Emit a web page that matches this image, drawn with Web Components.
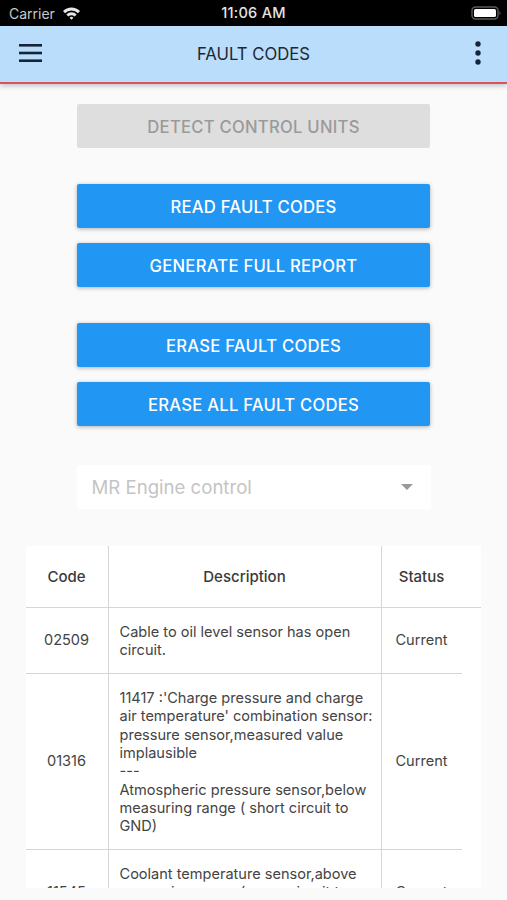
<!DOCTYPE html>
<html>
<head>
<meta charset="utf-8">
<style>
  html, body { margin: 0; padding: 0; background: #fafafa; }
  body { width: 507px; height: 900px; overflow: hidden; font-family: Inter, Roboto, "Liberation Sans", sans-serif; }
  main { display: flex; flex-direction: column; align-items: center; }
  .group { display: flex; flex-direction: column; gap: 15px; margin-top: 36px; }
  .first { margin-top: 20px; }
</style>
</head>
<body>
<status-bar></status-bar>
<app-bar title="FAULT CODES"></app-bar>
<main>
  <div class="group first"><action-button disabled>DETECT CONTROL UNITS</action-button></div>
  <div class="group">
    <action-button>READ FAULT CODES</action-button>
    <action-button>GENERATE FULL REPORT</action-button>
  </div>
  <div class="group">
    <action-button>ERASE FAULT CODES</action-button>
    <action-button>ERASE ALL FAULT CODES</action-button>
  </div>
  <unit-select>MR Engine control</unit-select>
  <fault-table>
    <fault-row code="02509" status="Current">Cable to oil level sensor has open circuit.</fault-row>
    <fault-row code="01316" status="Current">11417 :'Charge pressure and charge air temperature' combination sensor: pressure sensor,measured value implausible<br>---<br>Atmospheric pressure sensor,below measuring range ( short circuit to GND)</fault-row>
    <fault-row code="11545" status="Current">Coolant temperature sensor,above measuring range ( open circuit to positive)</fault-row>
  </fault-table>
</main>

<script>
class StatusBar extends HTMLElement {
    constructor() {
        super()
        this.attachShadow({ mode: 'open' }).innerHTML = `
            <style>
                :host {
                    display: flex;
                    align-items: center;
                    height: 26px;
                    padding: 0 5px 0 9px;
                    background: #000;
                    color: #e4e4e4;
                    font: 14px Inter, Roboto, sans-serif;
                }
                .carrier { display: flex; align-items: center; gap: 7px; flex: 1; color: #c8c8c8; }
                .time { flex: 1; text-align: center; font-weight: 500; font-size: 14.6px; letter-spacing: .25px; margin-left: -4px; white-space: nowrap; }
                .right { flex: 1; display: flex; justify-content: flex-end; }
                svg { display: block; }
            </style>
            <div class="carrier">Carrier
                <svg width="19" height="14" viewBox="0 0 19 14">
                    <path d="M1 5 A12 12 0 0 1 18 5 L16 7.2 A9 9 0 0 0 3 7.2Z M4.3 8.5 A7.4 7.4 0 0 1 14.7 8.5 L12.6 10.6 A4.5 4.5 0 0 0 6.4 10.6Z M7.6 11.8 A2.7 2.7 0 0 1 11.4 11.8 L9.5 13.8Z" fill="#e8e8e8"/>
                </svg>
            </div>
            <div class="time">11:06 AM</div>
            <div class="right">
                <svg width="31" height="14" viewBox="0 0 31 14">
                    <rect x="1" y="1" width="26" height="12" rx="3.5" fill="none" stroke="#5a5a5a" stroke-width="1.4"/>
                    <rect x="3" y="3" width="22" height="8" rx="1.6" fill="#fff"/>
                    <path d="M28.5 5 Q30.5 7 28.5 9Z" fill="#6a6a6a"/>
                </svg>
            </div>
        `
    }
}

class AppBar extends HTMLElement {
    constructor() {
        super()
        this.attachShadow({ mode: 'open' }).innerHTML = `
            <style>
                :host {
                    display: flex;
                    align-items: center;
                    justify-content: space-between;
                    box-sizing: border-box;
                    height: 58px;
                    padding: 0 26px 2px 19px;
                    background: #b9ddfb;
                    border-bottom: 2px solid #d9535a;
                    box-shadow: 0 2px 5px rgba(0, 0, 0, .22);
                    position: relative;
                    color: #1c2733;
                }
                .title { font-size: 16.7px; line-height: 24px; padding-top: 1px; position: absolute; left: 0; right: 0; text-align: center; }
                svg { display: block; position: relative; }
            </style>
            <svg width="23" height="18" viewBox="0 0 23 18" fill="#16243a">
                <rect y="0" width="23" height="2.6"/>
                <rect y="7.7" width="23" height="2.6"/>
                <rect y="15.4" width="23" height="2.6"/>
            </svg>
            <div class="title"></div>
            <svg width="6" height="24" viewBox="0 0 6 24" fill="#16243a">
                <circle cx="3" cy="3" r="2.7"/>
                <circle cx="3" cy="12" r="2.7"/>
                <circle cx="3" cy="21" r="2.7"/>
            </svg>
        `
        this.shadowRoot.querySelector('.title').textContent = this.getAttribute('title')
    }
}

class ActionButton extends HTMLElement {
    constructor() {
        super()
        this.attachShadow({ mode: 'open' }).innerHTML = `
            <style>
                :host {
                    display: flex;
                    align-items: center;
                    justify-content: center;
                    box-sizing: border-box;
                    width: 353px;
                    height: 44px;
                    padding-top: 1px;
                    border-radius: 2px;
                    background: #2196f3;
                    color: #fff;
                    font-size: 16.65px;
                    font-weight: 500;
                    letter-spacing: .25px;
                    box-shadow: 0 1px 4px rgba(0, 0, 0, .3);
                }
                :host([disabled]) {
                    background: #dedede;
                    color: #9a9a9a;
                    box-shadow: none;
                }
            </style>
            <slot></slot>
        `
    }
}

class UnitSelect extends HTMLElement {
    constructor() {
        super()
        this.attachShadow({ mode: 'open' }).innerHTML = `
            <style>
                :host {
                    display: flex;
                    align-items: center;
                    justify-content: space-between;
                    box-sizing: border-box;
                    width: 354px;
                    height: 44px;
                    margin-top: 39px;
                    padding: 0 18px 0 15px;
                    border-radius: 3px;
                    background: #fff;
                    color: #c4c4c4;
                    font-size: 18.6px;
                }
                .arrow { width: 0; height: 0; border: 6.5px solid transparent; border-top-color: #9a9a9a; border-bottom: 0; }
            </style>
            <slot></slot>
            <div class="arrow"></div>
        `
    }
}

class FaultTable extends HTMLElement {
    constructor() {
        super()
        this.attachShadow({ mode: 'open' }).innerHTML = `
            <style>
                :host {
                    display: block;
                    box-sizing: border-box;
                    width: 455px;
                    height: 342px;
                    margin: 37px 0 0 -1px;
                    background: #fff;
                    overflow: hidden;
                    color: #444;
                }
                .head {
                    display: grid;
                    grid-template-columns: 82px 273px 81px;
                    height: 62px;
                    border-bottom: 1px solid #d6d6d6;
                    box-sizing: border-box;
                    width: 100%;
                    font-size: 15px;
                    font-weight: 500;
                    color: #3a3a3a;
                }
                .head div { display: flex; align-items: center; justify-content: center; }
                .head div + div { border-left: 1px solid #d6d6d6; }
            </style>
            <div class="head">
                <div>Code</div>
                <div>Description</div>
                <div>Status</div>
            </div>
            <slot></slot>
        `
    }
}

class FaultRow extends HTMLElement {
    constructor() {
        super()
        this.attachShadow({ mode: 'open' }).innerHTML = `
            <style>
                :host {
                    display: grid;
                    grid-template-columns: 82px 274px 80px;
                    width: 436px;
                    border-bottom: 1px solid #d6d6d6;
                    font-size: 14.55px;
                    line-height: 18.3px;
                }
                .cell { display: flex; align-items: center; justify-content: center; }
                .desc { border-left: 1px solid #d6d6d6; border-right: 1px solid #d6d6d6; padding: 15px 6px 13.5px 11px; }
                .status { white-space: nowrap; }
            </style>
            <div class="cell code"></div>
            <div class="desc"><slot></slot></div>
            <div class="cell status"></div>
        `
        this.shadowRoot.querySelector('.code').textContent = this.getAttribute('code')
        this.shadowRoot.querySelector('.status').textContent = this.getAttribute('status')
    }
}

customElements.define('status-bar', StatusBar)
customElements.define('app-bar', AppBar)
customElements.define('action-button', ActionButton)
customElements.define('unit-select', UnitSelect)
customElements.define('fault-table', FaultTable)
customElements.define('fault-row', FaultRow)
</script>
</body>
</html>
